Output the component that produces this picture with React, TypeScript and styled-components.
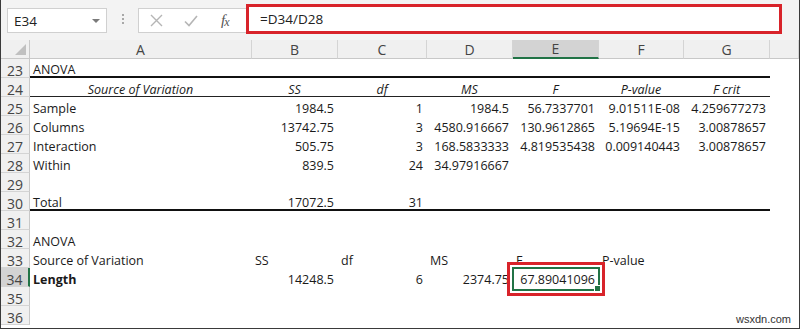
import React from 'react';
import styled, { createGlobalStyle } from 'styled-components';

const GlobalStyle = createGlobalStyle`
  html, body {
    margin: 0;
    padding: 0;
    background: #ffffff;
  }
`;

type Align = 'left' | 'right' | 'center';
type Line = 'none' | 'thin' | 'thick';

interface CellData {
  text?: string;
  align?: Align;
  italic?: boolean;
  bold?: boolean;
}

const COLS = ['A', 'B', 'C', 'D', 'E', 'F', 'G'];

const rows: { num: number; line?: Line; cells: CellData[] }[] = [
  { num: 23, line: 'thick', cells: [{ text: 'ANOVA' }] },
  {
    num: 24,
    line: 'thin',
    cells: [
      { text: 'Source of Variation', align: 'center', italic: true },
      { text: 'SS', align: 'center', italic: true },
      { text: 'df', align: 'center', italic: true },
      { text: 'MS', align: 'center', italic: true },
      { text: 'F', align: 'center', italic: true },
      { text: 'P-value', align: 'center', italic: true },
      { text: 'F crit', align: 'center', italic: true },
    ],
  },
  {
    num: 25,
    cells: [
      { text: 'Sample' },
      { text: '1984.5', align: 'right' },
      { text: '1', align: 'right' },
      { text: '1984.5', align: 'right' },
      { text: '56.7337701', align: 'right' },
      { text: '9.01511E-08', align: 'right' },
      { text: '4.259677273', align: 'right' },
    ],
  },
  {
    num: 26,
    cells: [
      { text: 'Columns' },
      { text: '13742.75', align: 'right' },
      { text: '3', align: 'right' },
      { text: '4580.916667', align: 'right' },
      { text: '130.9612865', align: 'right' },
      { text: '5.19694E-15', align: 'right' },
      { text: '3.00878657', align: 'right' },
    ],
  },
  {
    num: 27,
    cells: [
      { text: 'Interaction' },
      { text: '505.75', align: 'right' },
      { text: '3', align: 'right' },
      { text: '168.5833333', align: 'right' },
      { text: '4.819535438', align: 'right' },
      { text: '0.009140443', align: 'right' },
      { text: '3.00878657', align: 'right' },
    ],
  },
  {
    num: 28,
    cells: [
      { text: 'Within' },
      { text: '839.5', align: 'right' },
      { text: '24', align: 'right' },
      { text: '34.97916667', align: 'right' },
    ],
  },
  { num: 29, cells: [] },
  {
    num: 30,
    line: 'thick',
    cells: [
      { text: 'Total' },
      { text: '17072.5', align: 'right' },
      { text: '31', align: 'right' },
    ],
  },
  { num: 31, cells: [] },
  { num: 32, cells: [{ text: 'ANOVA' }] },
  {
    num: 33,
    cells: [
      { text: 'Source of Variation' },
      { text: 'SS' },
      { text: 'df' },
      { text: 'MS' },
      { text: 'F' },
      { text: 'P-value' },
    ],
  },
  {
    num: 34,
    cells: [
      { text: 'Length', bold: true },
      { text: '14248.5', align: 'right' },
      { text: '6', align: 'right' },
      { text: '2374.75', align: 'right' },
      { text: '67.89041096', align: 'right' },
    ],
  },
  { num: 35, cells: [] },
  { num: 36, cells: [] },
];

const Frame = styled.div`
  width: 800px;
  height: 329px;
  box-sizing: border-box;
  border: 1px solid #3a3a3a;
  border-top: none;
  overflow: hidden;
  position: relative;
  background: #ffffff;
  font-family: 'Open Sans', 'Liberation Sans', sans-serif;
  color: #1a1a1a;
`;

const Toolbar = styled.div`
  height: 40px;
  box-sizing: border-box;
  display: flex;
  align-items: flex-start;
  padding: 4px 0 0 6px;
  background: #f3f3f3;
`;

const NameBox = styled.div`
  margin-top: 4px;
  width: 100px;
  height: 25px;
  box-sizing: border-box;
  background: #ffffff;
  border: 1px solid #d0d0d0;
  display: flex;
  align-items: center;
  justify-content: space-between;
  padding: 0 6px 0 6px;
  font-size: 13.5px;
  color: #222;
`;

const DropArrow = styled.span`
  width: 0;
  height: 0;
  border-left: 4px solid transparent;
  border-right: 4px solid transparent;
  border-top: 4px solid #7a7a7a;
`;

const Dots = styled.div`
  margin: 10px 14px 0 15px;
  display: flex;
  flex-direction: column;
  gap: 2px;

  span {
    width: 2px;
    height: 2px;
    background: #a8a8a8;
  }
`;

const ButtonBox = styled.div`
  margin-top: 4px;
  width: 108px;
  height: 25px;
  box-sizing: border-box;
  background: #ffffff;
  border: 1px solid #d0d0d0;
  border-right: none;
  display: flex;
  align-items: center;
  padding-left: 11px;
  gap: 21px;
`;

const Fx = styled.span`
  font-family: 'Liberation Serif', serif;
  font-style: italic;
  font-size: 15px;
  color: #555;
  margin-left: 2px;
  letter-spacing: -1px;

  sub {
    font-size: 12px;
    vertical-align: -1px;
  }
`;

const FormulaBox = styled.div`
  width: 536px;
  height: 30px;
  box-sizing: border-box;
  background: #ffffff;
  border: 3px solid #d8232a;
  display: flex;
  align-items: center;
  padding-left: 11px;
  font-size: 13.5px;
  color: #222;
`;

const Grid = styled.div`
  display: grid;
  grid-template-columns: 29px 222px 86px 89px 86px 86px 85px 86px 1fr;
  grid-auto-rows: 19px;
  font-size: 12.5px;
`;

const ColHead = styled.div<{ $active?: boolean }>`
  background: ${(p) => (p.$active ? '#d3d3d3' : '#f0f0f0')};
  border-right: 1px solid #d4d4d4;
  border-bottom: ${(p) => (p.$active ? '2px solid #217346' : '1px solid #c8c8c8')};
  box-sizing: border-box;
  display: flex;
  align-items: center;
  justify-content: center;
  font-size: 14px;
  color: #444;
`;

const Corner = styled.div`
  background: #f0f0f0;
  border-right: 1px solid #c8c8c8;
  border-bottom: 1px solid #c8c8c8;
  box-sizing: border-box;
  position: relative;

  &::after {
    content: '';
    position: absolute;
    right: 3px;
    bottom: 3px;
    width: 0;
    height: 0;
    border-left: 11px solid transparent;
    border-bottom: 11px solid #c0c0c0;
  }
`;

const RowHead = styled.div<{ $active?: boolean }>`
  background: ${(p) => (p.$active ? '#d3d3d3' : '#f0f0f0')};
  border-right: ${(p) => (p.$active ? '2px solid #217346' : '1px solid #c8c8c8')};
  border-bottom: 1px solid #d4d4d4;
  box-sizing: border-box;
  display: flex;
  align-items: center;
  justify-content: center;
  font-size: 14px;
  color: #444;
  padding-top: 4px;
`;

const Cell = styled.div<{ $align: Align; $italic?: boolean; $bold?: boolean; $line: Line }>`
  box-sizing: border-box;
  display: flex;
  align-items: center;
  justify-content: ${(p) =>
    p.$align === 'right' ? 'flex-end' : p.$align === 'center' ? 'center' : 'flex-start'};
  padding: 4px 4px 0 3px;
  white-space: nowrap;
  font-style: ${(p) => (p.$italic ? 'italic' : 'normal')};
  font-weight: ${(p) => (p.$bold ? 700 : 400)};
  border-bottom: ${(p) =>
    p.$line === 'thick' ? '2px solid #111' : p.$line === 'thin' ? '1px solid #222' : 'none'};
  position: relative;
`;

const Selected = styled.div`
  position: absolute;
  left: -1px;
  top: -1px;
  right: -1px;
  bottom: -4px;
  border: 2px solid #217346;
  box-shadow: 0 0 0 2px #ffffff, 0 0 0 5px #d8232a;
  pointer-events: none;

  &::after {
    content: '';
    position: absolute;
    right: -3px;
    bottom: -3px;
    width: 5px;
    height: 5px;
    background: #217346;
    border: 1px solid #fff;
  }
`;

const Watermark = styled.div`
  position: absolute;
  right: 8px;
  bottom: 3px;
  font-family: 'Liberation Sans', sans-serif;
  font-size: 11px;
  color: #333;
  background: #ffffff;
`;

const XIcon = () => (
  <svg width="13" height="13" viewBox="0 0 13 13">
    <path d="M1 1 L12 12 M12 1 L1 12" stroke="#b5b5b5" strokeWidth="1.4" fill="none" />
  </svg>
);

const CheckIcon = () => (
  <svg width="14" height="12" viewBox="0 0 14 12">
    <path d="M1 6.5 L5 10.5 L13 1" stroke="#b5b5b5" strokeWidth="1.6" fill="none" />
  </svg>
);

export default function App() {
  return (
    <>
      <GlobalStyle />
      <Frame>
        <Toolbar>
          <NameBox>
            E34
            <DropArrow />
          </NameBox>
          <Dots>
            <span />
            <span />
            <span />
          </Dots>
          <ButtonBox>
            <XIcon />
            <CheckIcon />
            <Fx>
              f<sub>x</sub>
            </Fx>
          </ButtonBox>
          <FormulaBox>=D34/D28</FormulaBox>
        </Toolbar>
        <Grid>
          <Corner />
          {COLS.map((c) => (
            <ColHead key={c} $active={c === 'E'}>
              {c}
            </ColHead>
          ))}
          <ColHead />
          {rows.map((r) => (
            <React.Fragment key={r.num}>
              <RowHead $active={r.num === 34}>{r.num}</RowHead>
              {COLS.map((c, i) => {
                const d = r.cells[i] || {};
                const isSel = r.num === 34 && c === 'E';
                return (
                  <Cell
                    key={c}
                    $align={d.align || 'left'}
                    $italic={d.italic}
                    $bold={d.bold}
                    $line={r.line || 'none'}
                  >
                    {d.text}
                    {isSel && <Selected />}
                  </Cell>
                );
              })}
              <Cell $align="left" $line="none" />
            </React.Fragment>
          ))}
        </Grid>
        <Watermark>wsxdn.com</Watermark>
      </Frame>
    </>
  );
}
